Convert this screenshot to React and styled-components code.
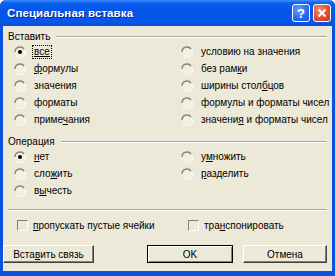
import styled, { createGlobalStyle } from 'styled-components';

const GlobalStyle = createGlobalStyle`
	html, body {
		margin: 0;
		padding: 0;
		background: #ffffff;
	}
	body {
		font-family: 'Liberation Sans', Arial, sans-serif;
		font-size: 10px;
		color: #000;
	}
`;

const Window = styled.div`
	width: 335px;
	height: 276px;
	box-sizing: border-box;
	display: flex;
	flex-direction: column;
	background: #0a52e0;
	border-radius: 6px 6px 0 0;
	overflow: hidden;
`;

const TitleBar = styled.div`
	height: 26px;
	flex-shrink: 0;
	display: flex;
	align-items: center;
	padding: 0 4px 0 7px;
	background: linear-gradient(
		to bottom,
		#3d8dff 0%,
		#0a60f0 12%,
		#0454e6 45%,
		#0658ee 80%,
		#0a4fd8 100%
	);
`;

const Title = styled.div`
	flex: 1;
	color: #fff;
	font-weight: bold;
	font-size: 11.5px;
	letter-spacing: 0.1px;
	text-shadow: 1px 1px 0 #0a2a8c;
`;

const CaptionButton = styled.div`
	width: 18px;
	height: 18px;
	box-sizing: border-box;
	margin-left: 3px;
	border: 1px solid #fff;
	border-radius: 3px;
	display: flex;
	align-items: center;
	justify-content: center;
	color: #fff;
	font-weight: bold;
	font-size: 13px;
	background: ${(p) =>
		p.$close
			? 'radial-gradient(circle at 35% 30%, #f09070 0%, #e0502e 55%, #c2381a 100%)'
			: 'radial-gradient(circle at 35% 30%, #6aa0ff 0%, #2a6cf2 55%, #1c52d4 100%)'};
`;

const Body = styled.div`
	flex: 1;
	margin: 0 3px 5px 3px;
	background: #ece9d8;
	padding: 3px 5px 0 5px;
	display: flex;
	flex-direction: column;
`;

const GroupHeader = styled.div`
	height: 14px;
	display: flex;
	align-items: center;
	gap: 6px;
	margin-top: ${(p) => p.$top || 0}px;

	&::after {
		content: '';
		flex: 1;
		height: 1px;
		background: #aca899;
		box-shadow: 0 1px 0 #fff;
	}
`;

const Options = styled.div`
	display: grid;
	grid-template-columns: 167px 1fr;
	grid-auto-flow: column;
	grid-template-rows: repeat(${(p) => p.$rows}, 17px);
	padding-left: 6px;
`;

const Option = styled.div`
	display: flex;
	align-items: center;
	gap: 6px;
	white-space: nowrap;
	grid-column: ${(p) => p.$col};
`;

const Label = styled.span`
	border: 1px dotted ${(p) => (p.$focus ? '#000' : 'transparent')};
	padding: 0 1px;
	line-height: 12px;
`;

const Separator = styled.div`
	height: 1px;
	background: #aca899;
	box-shadow: 0 1px 0 #fff;
	margin: 10px 0 7px 0;
`;

const CheckRow = styled.div`
	display: grid;
	grid-template-columns: 171px 1fr;
	height: 17px;
	padding-left: 9px;
`;

const CheckItem = styled.div`
	display: flex;
	align-items: center;
	gap: 5px;
	white-space: nowrap;
`;

const CheckBox = styled.span`
	width: 11px;
	height: 11px;
	box-sizing: border-box;
	border-top: 1px solid #808080;
	border-left: 1px solid #808080;
	border-right: 1px solid #fff;
	border-bottom: 1px solid #fff;
`;

const ButtonRow = styled.div`
	display: flex;
	margin-top: 11px;
	margin-left: -5px;
`;

const Button = styled.div`
	width: ${(p) => p.$w}px;
	height: 18px;
	box-sizing: border-box;
	margin-left: ${(p) => p.$ml || 0}px;
	display: flex;
	align-items: center;
	justify-content: center;
	background: #ece9d8;
	border: 1px solid;
	border-color: ${(p) => (p.$default ? '#000' : '#fff #404040 #404040 #fff')};
	box-shadow: ${(p) =>
		p.$default
			? 'inset 1px 1px 0 #fff, inset -1px -1px 0 #808080'
			: 'inset -1px -1px 0 #808080'};
	font-size: 10px;
`;

function Radio({ checked }) {
	return (
		<svg width="12" height="12" viewBox="0 0 12 12">
			<circle cx="6" cy="6" r="5" fill="#f2f0e6" />
			<path d="M1 6 A5 5 0 0 1 10 3" fill="none" stroke="#8a8675" strokeWidth="1.4" />
			<path d="M10.5 4 A5 5 0 0 1 2 10" fill="none" stroke="#ffffff" strokeWidth="1" />
			{checked && <circle cx="6" cy="6" r="2" fill="#000" />}
		</svg>
	);
}

const pasteLeft = [
	[<u key="a">все</u>],
	[<u key="a">ф</u>, 'ормулы'],
	['значения'],
	['форматы'],
	['приме', <u key="a">ч</u>, 'ания'],
];

const pasteRight = [
	['условию на значения'],
	['без рам', <u key="a">к</u>, 'и'],
	['ширины стол', <u key="a">б</u>, 'цов'],
	['формулы и форматы чисел'],
	['значени', <u key="a">я</u>, ' и форматы чисел'],
];

const opLeft = [
	[<u key="a">н</u>, 'ет'],
	['сло', <u key="a">ж</u>, 'ить'],
	['в', <u key="a">ы</u>, 'честь'],
];

const opRight = [
	['у', <u key="a">м</u>, 'ножить'],
	[<u key="a">р</u>, 'азделить'],
];

function OptionList({ left, right, rows, checkedIndex, focusFirst }) {
	return (
		<Options $rows={rows}>
			{left.map((t, i) => (
				<Option key={'l' + i} $col={1}>
					<Radio checked={i === checkedIndex} />
					<Label $focus={focusFirst && i === 0}>{t}</Label>
				</Option>
			))}
			{right.map((t, i) => (
				<Option key={'r' + i} $col={2}>
					<Radio />
					<Label>{t}</Label>
				</Option>
			))}
		</Options>
	);
}

export default function App() {
	return (
		<>
			<GlobalStyle />
			<Window>
				<TitleBar>
					<Title>Специальная вставка</Title>
					<CaptionButton>?</CaptionButton>
					<CaptionButton $close>
						<svg width="10" height="10" viewBox="0 0 10 10">
							<path d="M1.5 1.5 L8.5 8.5 M8.5 1.5 L1.5 8.5" stroke="#fff" strokeWidth="2" />
						</svg>
					</CaptionButton>
				</TitleBar>
				<Body>
					<GroupHeader>Вставить</GroupHeader>
					<OptionList left={pasteLeft} right={pasteRight} rows={5} checkedIndex={0} focusFirst />
					<GroupHeader $top={6}>Операция</GroupHeader>
					<OptionList left={opLeft} right={opRight} rows={3} checkedIndex={0} />
					<Separator />
					<CheckRow>
						<CheckItem>
							<CheckBox />
							<span>
								<u>п</u>ропускать пустые ячейки
							</span>
						</CheckItem>
						<CheckItem>
							<CheckBox />
							<span>
								тра<u>н</u>спонировать
							</span>
						</CheckItem>
					</CheckRow>
					<ButtonRow>
						<Button $w={91}>
							<span>
								Вста<u>в</u>ить связь
							</span>
						</Button>
						<Button $w={86} $ml={53} $default>
							OK
						</Button>
						<Button $w={84} $ml={10}>
							Отмена
						</Button>
					</ButtonRow>
				</Body>
			</Window>
		</>
	);
}
